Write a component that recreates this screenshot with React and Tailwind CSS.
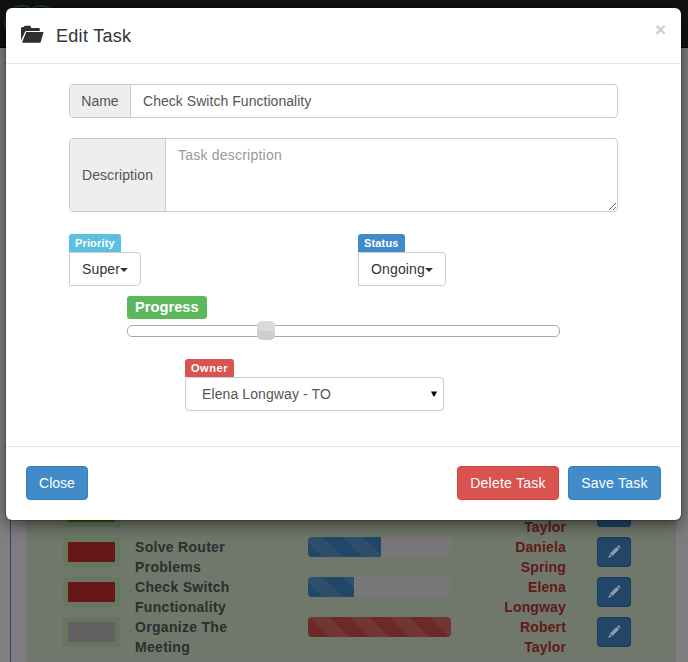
import React from "react";

const rows = [
  { swatch: "bg-[#4f5309]", task: ["", ""], owner: ["", "Taylor"], fill: 0, bar: "bg-[#204668]", hideBar: true },
  { swatch: "bg-[#671717]", frame: "bg-[#65775f]", task: ["Solve Router", "Problems"], owner: ["Daniela", "Spring"], fill: 73, bar: "bg-[#204668] bg-[position:-5px_0]" },
  { swatch: "bg-[#671717]", frame: "bg-[#65775f]", task: ["Check Switch", "Functionality"], owner: ["Elena", "Longway"], fill: 46, bar: "bg-[#204668] bg-[position:-5px_0]" },
  { swatch: "bg-[#616161]", frame: "bg-[#677560]", task: ["Organize The", "Meeting"], owner: ["Robert", "Taylor"], fill: 143, bar: "bg-[#6d2927] bg-[position:2px_0]" },
];

const stripes =
  "bg-[linear-gradient(45deg,rgba(128,128,128,0.15)_25%,transparent_25%,transparent_50%,rgba(128,128,128,0.15)_50%,rgba(128,128,128,0.15)_75%,transparent_75%,transparent)] bg-[length:40px_40px]";

function Pencil() {
  return (
    <svg width="14" height="14" viewBox="0 0 14 14" fill="#8f9ca8">
      <path d="M10.3 1.2 11.2.5q.5-.3 1 .1l1 1q.5.5.1 1l-.8.9zM9.7 1.8l2.4 2.4-6.6 6.9-2.5-2.5zM2.5 9.2l2.4 2.4L1.2 13z" />
    </svg>
  );
}

function TaskRow({ row }) {
  return (
    <div className="flex h-10 items-start text-[14px] font-bold leading-5">
      <div className={`ml-[37px] flex h-[30px] w-[57px] items-center justify-center ${row.frame || "bg-[#65775f]"}`}>
        <div className={`h-5 w-[47px] ${row.swatch}`} />
      </div>
      <div className="ml-[15px] w-[173px] whitespace-nowrap tracking-[0.3px] text-[#2d2e2d]">
        <div className="h-5">{row.task[0]}</div>
        <div className="h-5">{row.task[1]}</div>
      </div>
      <div className={`h-5 w-[143px] overflow-hidden rounded ${row.hideBar ? "" : "bg-[#787678]"}`}>
        <div className={`h-5 ${row.bar} ${stripes}`} style={{ width: row.fill }} />
      </div>
      <div className="w-[115px] text-right tracking-[0.15px] text-[#611a19]">
        <div className="h-5">{row.owner[0]}</div>
        <div className="h-5">{row.owner[1]}</div>
      </div>
      <div className="ml-[31px] flex h-[30px] w-[34px] items-center justify-center rounded-[3px] border border-[#1b3f60] bg-[#204668]">
        <Pencil />
      </div>
    </div>
  );
}

function Caret() {
  return (
    <svg width="8" height="4" viewBox="0 0 8 4" className="mt-px">
      <path d="M0 0h8L4 4z" fill="#333" />
    </svg>
  );
}

function Dropdown({ label, color, value }) {
  return (
    <div className="flex flex-col items-start">
      <span className={`h-[18px] rounded-t-[3px] px-[6px] text-[11px] font-bold leading-[19px] tracking-[0.15px] text-white ${color}`}>{label}</span>
      <button className="flex h-[34px] items-center rounded-r border border-[#ccc] bg-white px-3 text-[14px] tracking-[0.15px] text-[#333]">
        {value}
        <Caret />
      </button>
    </div>
  );
}

function Modal() {
  return (
    <div className="absolute left-[6px] top-2 flex h-[512px] w-[675px] flex-col rounded-[6px] bg-white shadow-[0_5px_15px_rgba(0,0,0,0.5),0_0_0_1px_rgba(0,0,0,0.2)]">
      <div className="flex h-14 items-start border-b border-[#e5e5e5] pl-[15px] pr-[15px]">
        <svg width="23" height="18" viewBox="0 0 23 18" className="mt-[17px]" fill="#2f2f2f">
          <path d="M0 15.5V3l1-1h2V1.5L4 .8h5l1 .9V3h8l.8.8V6H5.5q-1 0-1.4.8z" />
          <path d="M5.2 7H22.6L19.6 17.2q-.2.6-.8.6H1z" />
        </svg>
        <h4 className="ml-3 mt-[18px] text-[18px] leading-5 tracking-[0.3px] text-[#333]">Edit Task</h4>
        <button className="ml-auto mt-[12px] text-[19px] font-bold leading-5 text-[#ccc]">×</button>
      </div>

      <div className="flex grow flex-col px-[63px] pt-5">
        <div className="flex h-[34px] w-[549px] rounded border border-[#ccc] text-[14px] text-[#555]">
          <span className="flex w-[61px] items-center justify-center rounded-l-[3px] border-r border-[#ccc] bg-[#eee]">Name</span>
          <input className="grow rounded-r px-3 tracking-[0.04px] outline-none" defaultValue="Check Switch Functionality" />
        </div>

        <div className="mt-5 flex h-[74px] w-[549px] rounded border border-[#ccc] text-[14px] text-[#555]">
          <span className="flex w-24 items-center justify-center rounded-l-[3px] border-r border-[#ccc] bg-[#eee] tracking-[0.1px]">Description</span>
          <textarea className="h-[72px] grow rounded-r px-3 py-[6px] leading-5 tracking-[0.22px] outline-none placeholder:text-[#999]" placeholder="Task description" />
        </div>

        <div className="mt-[22px] grid grid-cols-[289px_auto] justify-start">
          <Dropdown label="Priority" color="bg-[#5bc0de]" value="Super" />
          <Dropdown label="Status" color="bg-[#428bca]" value="Ongoing" />
        </div>

        <div className="ml-[58px] mt-[10px] flex flex-col items-start">
          <span className="h-[23px] rounded-[3px] bg-[#5cb85c] px-2 text-[14.7px] font-bold leading-[23px] text-white">Progress</span>
          <div className="mt-[6px] flex h-3 w-[433px] items-center rounded-[5px] border border-[#aaa]">
            <div className="mb-px ml-[129px] h-[19px] w-[18px] shrink-0 rounded-[5px] bg-linear-to-b from-[#dadada] from-50% to-[#cecece] to-50%" />
          </div>
        </div>

        <div className="ml-[116px] mt-[22px] flex flex-col items-start">
          <span className="h-[18px] rounded-t-[3px] bg-[#d9534f] px-[6px] text-[11px] font-bold leading-[19px] tracking-[0.55px] text-white">Owner</span>
          <div className="flex h-[34px] w-[259px] items-center justify-between rounded border border-[#ccc] pl-4 pr-[6px] text-[14px] tracking-[0.1px] text-[#555]">
            Elena Longway - TO
            <svg width="6" height="6" viewBox="0 0 7 7" className="mb-px">
              <path d="M0 .5h7L4 6.5H3z" fill="#000" />
            </svg>
          </div>
        </div>
      </div>

      <div className="flex h-[74px] items-start border-t border-[#e5e5e5] px-5 pt-[19px] text-[14px] text-white">
        <button className="h-[34px] w-[62px] rounded border border-[#357ebd] bg-[#428bca]">Close</button>
        <button className="ml-auto h-[34px] w-[102px] rounded border border-[#d43f3a] bg-[#d9534f] tracking-[0.25px]">Delete Task</button>
        <button className="ml-[9px] h-[34px] w-[93px] rounded border border-[#357ebd] bg-[#428bca] tracking-[0.25px]">Save Task</button>
      </div>
    </div>
  );
}

export default function App() {
  return (
    <div className="relative flex h-[662px] w-[688px] flex-col overflow-hidden bg-[#7f7f7f] font-['Liberation_Sans',Arial,sans-serif]">
      <div className="h-12 shrink-0 border-b border-black bg-[#111]">
        <svg width="60" height="46" viewBox="0 0 60 46" fill="none" stroke="#173438" strokeWidth="2">
          <circle cx="22" cy="23" r="17" />
          <circle cx="41" cy="23" r="17" />
        </svg>
      </div>
      <div className="ml-[10px] flex grow border-l border-[#24466a] bg-[#7e7c7f] pl-[15px] pr-3">
        <div className="flex grow flex-col border-b border-r border-[#747274] bg-[#70786c] pt-[449px]">
          {rows.map((row, i) => (
            <TaskRow key={i} row={row} />
          ))}
        </div>
      </div>
      <Modal />
    </div>
  );
}
